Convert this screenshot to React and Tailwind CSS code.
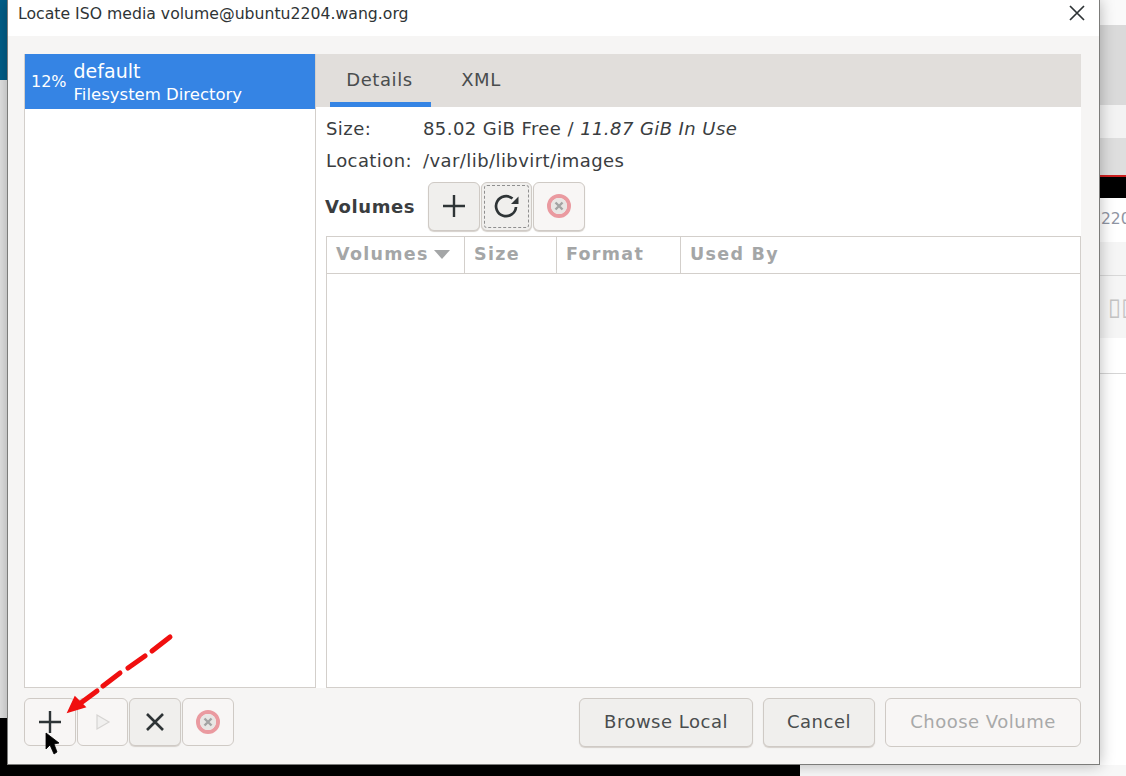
import React from "react";

const F = { fontFamily: '"DejaVu Sans", sans-serif' };

function Btn({ className = "", children }) {
  return (
    <div className={"flex items-center justify-center rounded-[6px] border border-[#cfcac5] shadow-[0_1px_1px_#d5d0cb] " + className}>
      {children}
    </div>
  );
}

const Plus = ({ c = "#2e3436" }) => (
  <svg width="24" height="24" viewBox="0 0 24 24" fill="none" stroke={c} strokeWidth="2.4"><path d="M12 1v22M1 12h22" /></svg>
);
const Stop = () => (
  <svg width="26" height="26" viewBox="0 0 26 26" fill="none">
    <circle cx="13" cy="13" r="10" stroke="#ea9aa0" strokeWidth="4" />
    <circle cx="13" cy="13" r="8" fill="#e8e6e4" />
    <path d="M9.5 9.5l7 7M16.5 9.5l-7 7" stroke="#a3a3a3" strokeWidth="2.4" />
  </svg>
);

export default function App() {
  return (
    <div className="flex flex-col w-[1126px] h-[776px] overflow-hidden bg-black relative" style={F}>
      <div className="flex h-[765px]">
        <div className="w-[7px] flex flex-col shrink-0">
          <div className="h-[80px] bg-[#005f8a]" />
          <div className="h-[638px] bg-[#e4e4e4]" />
          <div className="flex-1 bg-black" />
        </div>
        <div className="w-[1093px] shrink-0 flex flex-col bg-[#f6f5f4] border-x border-b border-[#7c7c7a] relative z-10 shadow-[0_0_14px_rgba(0,0,0,0.28)]">
          <div className="h-[36px] bg-white flex items-start justify-between pl-[10px] pr-[13px] pt-[4px] text-[15.7px] leading-[20px] text-[#2e3436]">
            <span>Locate ISO media volume@ubuntu2204.wang.org</span>
            <svg width="18" height="18" viewBox="0 0 18 18" stroke="#2e3436" strokeWidth="1.7"><path d="M2 2l14 14M16 2L2 16" /></svg>
          </div>
          <div className="flex-1 flex flex-col pl-[16px] pr-[18px] pt-[18px]">
            <div className="flex h-[634px]">
              <div className="w-[291px] bg-white border-l border-b border-[#d3cfcb]">
                <div className="h-[55px] bg-[#3584e4] text-white flex items-center pl-[6px] gap-[7px]">
                  <span className="text-[16px]">12%</span>
                  <div className="flex flex-col pt-[2px]">
                    <span className="text-[19px] leading-[23px]">default</span>
                    <span className="text-[16.5px] leading-[23px]">Filesystem Directory</span>
                  </div>
                </div>
              </div>
              <div className="w-[1px] bg-[#d3cfcb]" />
              <div className="flex-1 flex flex-col bg-white">
                <div className="h-[53px] bg-[#e1dedb] flex text-[18px] tracking-[0.6px] text-[#4a4d4e] pl-[14px]">
                  <div className="w-[101px] flex items-center justify-center border-b-[5px] border-[#3584e4] pt-[3px] pr-[2px]">Details</div>
                  <div className="w-[100px] flex items-center justify-center pb-[3px]">XML</div>
                </div>
                <div className="flex-1 flex flex-col pl-[10px] text-[18px] tracking-[0.42px] text-[#3a3d3f]">
                  <div className="flex h-[32px] items-center pt-[11px]">
                    <span className="w-[97px]">Size:</span>
                    <span>85.02 GiB Free / <i>11.87 GiB In Use</i></span>
                  </div>
                  <div className="flex h-[32px] items-center pt-[9px] mt-[1px]">
                    <span className="w-[97px]">Location:</span>
                    <span>/var/lib/libvirt/images</span>
                  </div>
                  <div className="flex items-center h-[50px] mt-[9px]">
                    <span className="font-bold w-[103px] tracking-[0.6px] -ml-[1px]">Volumes</span>
                    <Btn className="w-[52px] h-[49px] bg-[#f0efed]"><Plus /></Btn>
                    <Btn className="w-[51px] h-[49px] bg-[#f0efed] ml-[1px] relative">
                      <div className="absolute inset-[2px] border border-dashed border-[#8f8f8f] rounded-[3px]" />
                      <svg width="26" height="26" viewBox="0 0 26 26" fill="none" stroke="#2e3436" strokeWidth="2.7">
                        <path d="M22 14a10 10 0 1 1-3.5-8.5" />
                        <path d="M24.5 3.5v7.5h-7.5z" fill="#2e3436" stroke="none" />
                      </svg>
                    </Btn>
                    <Btn className="w-[52px] h-[49px] bg-[#f8f6f5] ml-[1px]"><Stop /></Btn>
                  </div>
                  <div className="flex-1 flex flex-col mt-[5px] border border-[#d3cfcb]">
                    <div className="flex h-[37px] border-b border-[#d3cfcb] font-bold text-[17.5px] text-[#a4a6a7] tracking-[1.3px]">
                      <div className="w-[138px] pl-[9px] pb-[1px] flex items-center border-r border-[#d3cfcb] gap-[5px]">
                        Volumes
                        <svg width="16" height="9" viewBox="0 0 16 9" className="shrink-0"><path d="M0 0h16L8 9z" fill="#a4a6a7" /></svg>
                      </div>
                      <div className="w-[92px] pl-[9px] pb-[1px] flex items-center border-r border-[#d3cfcb]">Size</div>
                      <div className="w-[124px] pl-[9px] pb-[1px] flex items-center border-r border-[#d3cfcb]">Format</div>
                      <div className="flex-1 pl-[9px] pb-[1px] flex items-center">Used By</div>
                    </div>
                    <div className="flex-1" />
                  </div>
                </div>
              </div>
            </div>
            <div className="flex mt-[10px] h-[49px] items-start text-[18px] tracking-[0.5px]">
              <Btn className="w-[52px] h-[48px] bg-[#f8f6f5] shadow-none"><Plus /></Btn>
              <Btn className="w-[51px] h-[48px] bg-[#f8f6f5] ml-[1px] shadow-none">
                <svg width="16" height="18" viewBox="0 0 16 18" fill="#f1f0ef" stroke="#d6d4d2" strokeWidth="1.2"><path d="M2 2l12 7-12 7z" /></svg>
              </Btn>
              <Btn className="w-[52px] h-[48px] bg-[#f0efed] ml-[1px]">
                <svg width="20" height="20" viewBox="0 0 20 20" stroke="#2e3436" strokeWidth="2.6"><path d="M2 2l16 16M18 2L2 18" /></svg>
              </Btn>
              <Btn className="w-[52px] h-[48px] bg-[#f8f6f5] ml-[1px] shadow-none"><Stop /></Btn>
              <div className="flex-1" />
              <Btn className="w-[174px] h-[49px] pb-[2px] bg-[#f0efed] text-[#4a4d4e]">Browse Local</Btn>
              <Btn className="w-[112px] h-[49px] pb-[2px] bg-[#f0efed] text-[#4a4d4e] ml-[10px]">Cancel</Btn>
              <Btn className="w-[196px] h-[49px] pb-[2px] bg-[#f8f6f5] text-[#a8a9a9] ml-[10px] shadow-none">Choose Volume</Btn>
            </div>
          </div>
        </div>
        <div className="flex-1 flex flex-col bg-white text-[15.5px] text-[#8f95a3]">
          <div className="h-[25px] bg-[#fafafa]" />
          <div className="h-[80px] bg-[#dadada]" />
          <div className="h-[33px] bg-[#f3f3f3]" />
          <div className="h-[37px] bg-[#dedede]" />
          <div className="h-[2px] bg-[#cc1f1f]" />
          <div className="h-[21px] bg-black" />
          <div className="h-[44px] flex items-center pl-[1px] overflow-hidden">220</div>
          <div className="h-[34px] bg-[#f5f5f5] border-b border-[#d8d8d8]" />
          <div className="h-[62px] bg-[#f5f5f5] flex items-center pl-[8px] text-[24px] text-[#c4c4c4] overflow-hidden">▯▯</div>
          <div className="h-[36px] bg-white border-b border-[#d5d5d5]" />
          <div className="flex-1 bg-white" />
        </div>
      </div>
      <div className="flex-1 flex">
        <div className="w-[800px] bg-black" />
        <div className="flex-1 bg-[#f7f7f7]" />
      </div>
      <svg className="absolute left-0 top-0 z-20 pointer-events-none" width="1126" height="776" viewBox="0 0 1126 776" fill="none">
        <path d="M170 637L152 651M145 656L128 668M120 673L103 686M97 691L78 705" stroke="#f00f0f" strokeWidth="5" strokeLinecap="round" />
        <path d="M68 712L75 697L85 707z" fill="#f00f0f" stroke="#f00f0f" strokeWidth="1.5" />
        <path d="M46 733V749L50 745L54 754L57 752L54 744L59 743z" fill="#000" stroke="#000" strokeWidth="0.8" />
      </svg>
    </div>
  );
}
